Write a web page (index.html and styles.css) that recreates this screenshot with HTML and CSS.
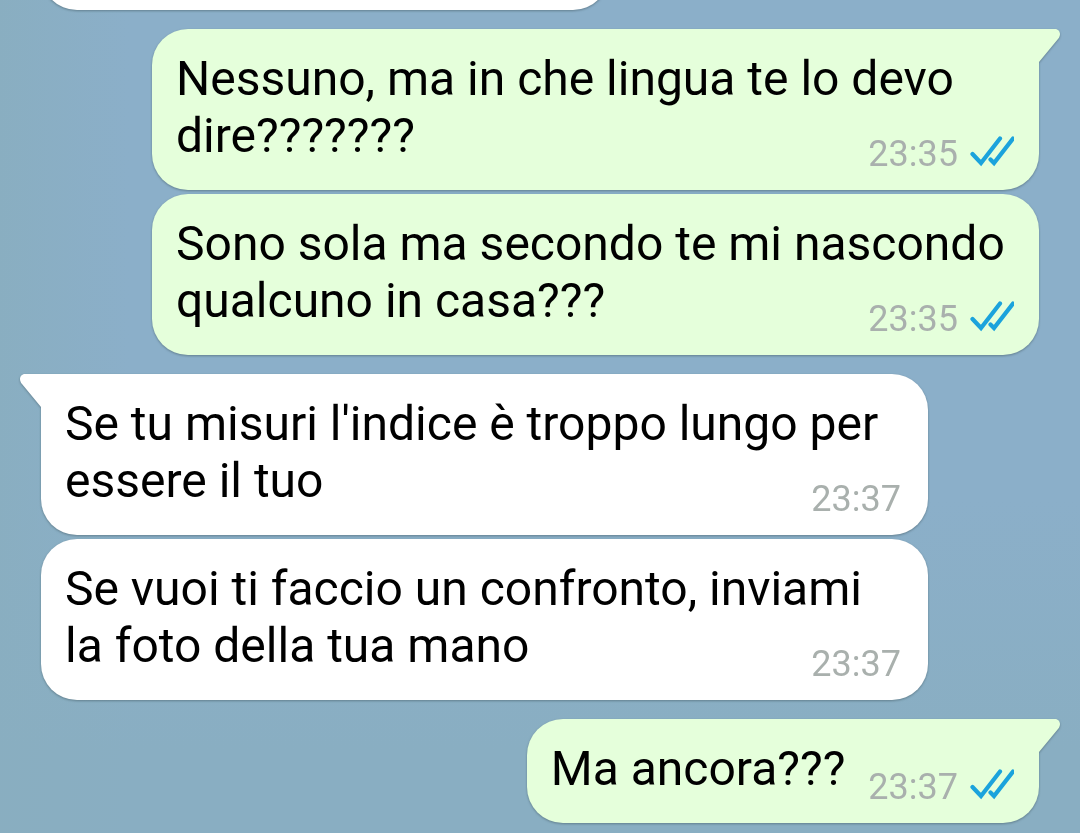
FILE: index.html
```
<!DOCTYPE html>
<html lang="it">
<head>
    <meta charset="UTF-8">
    <meta name="viewport" content="width=device-width, initial-scale=1.0">
    <title>Chat</title>
    <link rel="stylesheet" href="styles.css">
</head>
<body>

<!-- shared shapes -->
<svg class="defs" width="0" height="0">
    <symbol id="checks" viewBox="0 0 44 32">
        <path d="M2.5 19 L11 28 L30 3.5 M20.5 24.5 L24 28 L43 3.5" fill="none" stroke="#1ba3dc" stroke-width="4.2" stroke-linecap="round" stroke-linejoin="miter"/>
    </symbol>
    <symbol id="tail" viewBox="0 0 22 34">
        <path d="M0 0 H17 C21 0 23 4 21.5 7.5 Q21 9 20 10 L1 33 V34 H0 Z"/>
    </symbol>
</svg>

<main class="chat">
    <div class="message in first"></div>

    <div class="message out start">
        <svg class="tail"><use href="#tail"/></svg>
        <p class="text">Nessuno, ma in che lingua te lo devo dire???????
            <span class="meta"><time>23:35</time><svg class="checks"><use href="#checks"/></svg></span>
        </p>
    </div>
    <div class="message out">
        <p class="text">Sono sola ma secondo te mi nascondo qualcuno in casa???
            <span class="meta"><time>23:35</time><svg class="checks"><use href="#checks"/></svg></span>
        </p>
    </div>

    <div class="message in start">
        <svg class="tail"><use href="#tail"/></svg>
        <p class="text">Se tu misuri l'indice è troppo lungo per essere il tuo
            <span class="meta"><time>23:37</time></span>
        </p>
    </div>
    <div class="message in">
        <p class="text">Se vuoi ti faccio un confronto, inviami la foto della tua mano
            <span class="meta"><time>23:37</time></span>
        </p>
    </div>

    <div class="message out start">
        <svg class="tail"><use href="#tail"/></svg>
        <p class="text">Ma ancora???
            <span class="meta"><time>23:37</time><svg class="checks"><use href="#checks"/></svg></span>
        </p>
    </div>
</main>

</body>
</html>
```

FILE: styles.css
```
* {
    box-sizing: border-box;
}

body {
    margin: 0;
    font-family: Roboto, sans-serif;
    color: #000;
    background:
        linear-gradient(to right, rgba(137, 174, 192, 0.9), rgba(137, 174, 192, 0) 12%),
        linear-gradient(to bottom, #8bafc9 0%, #8bafc9 60%, #89aec2 90%);
}

.defs {
    position: absolute;
}

/* scrolled to the newest message, older ones run off the top */
.chat {
    display: flex;
    flex-direction: column;
    justify-content: flex-end;
    height: 100vh;
    padding: 0 41px 10px;
    overflow: hidden;
}

.message {
    position: relative;
    flex-shrink: 0;
    max-width: 887px;
    margin-top: 4px;
    padding: 21px 25px 15px 24px;
    border-radius: 36px;
    filter: drop-shadow(0 1px 1px rgba(70, 95, 105, 0.6));
}

.in {
    align-self: flex-start;
    padding-right: 27px;
    background-color: #fff;
    fill: #fff;
}

.out {
    align-self: flex-end;
    background-color: #e5ffdb;
    fill: #e5ffdb;
}

.start {
    margin-top: 19px;
}

.in.start {
    border-top-left-radius: 0;
}

.out.start {
    border-top-right-radius: 0;
}

.first {
    width: 568px;
    height: 104px;
}

.tail {
    position: absolute;
    top: 0;
    left: 100%;
    width: 22px;
    height: 34px;
    margin-left: -1px;
}

.in .tail {
    left: auto;
    right: 100%;
    margin: 0 -1px 0 0;
    transform: scaleX(-1);
}

.text {
    display: flow-root;
    margin: 0;
    font-size: 48px;
    line-height: 57px;
}

.meta {
    float: right;
    display: flex;
    align-items: center;
    gap: 12px;
    margin: 26px 0 0 23px;
    font-size: 36px;
    line-height: 42px;
    color: #a9b0ad;
}

.checks {
    width: 44px;
    height: 32px;
    margin-bottom: 6px;
    overflow: visible;
}
```
